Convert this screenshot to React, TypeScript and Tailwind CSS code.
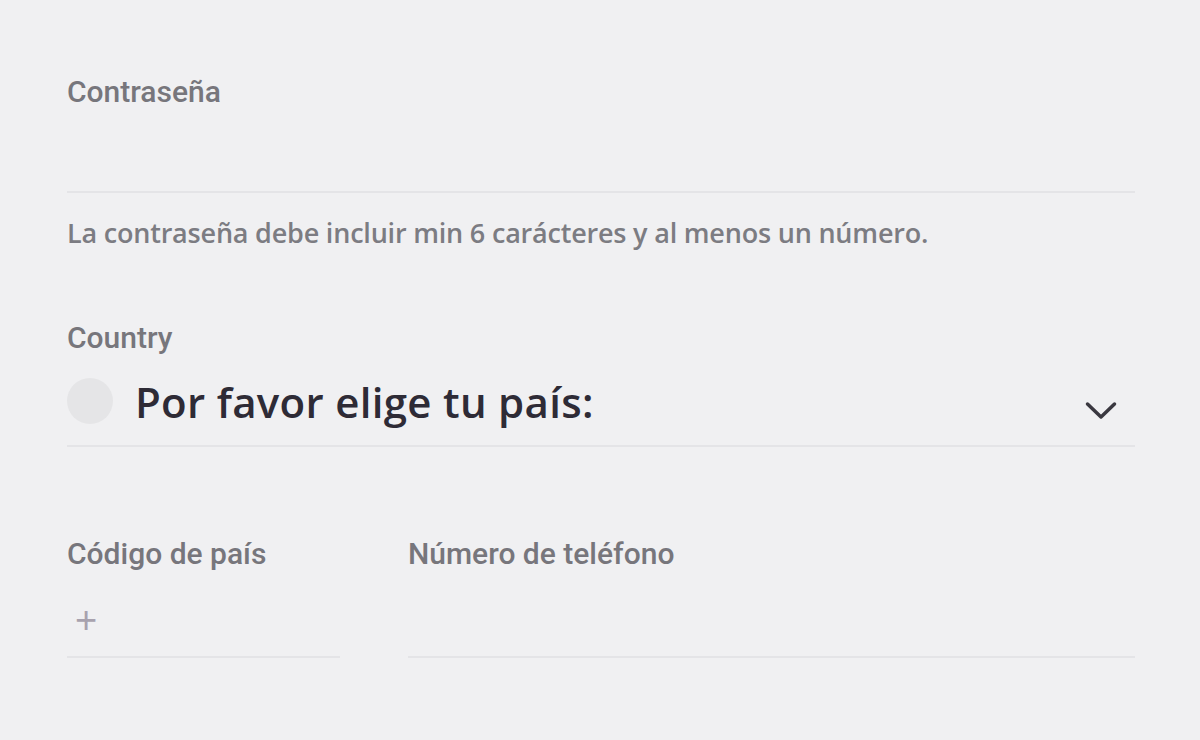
import React from "react";

const labelCls = "block text-[30px] leading-[36px] font-medium text-[#77767c]";

export default function App() {
  return (
    <div className="w-[1200px] h-[740px] bg-[#f0f0f2] overflow-hidden" style={{ fontFamily: "Roboto, 'Liberation Sans', sans-serif" }}>
      <div className="ml-[67px] w-[1068px] pt-[74px]">
        <label className={labelCls}>Contraseña</label>
        <div className="h-[83px] border-b-2 border-[#e4e4e7]"></div>
        <p className="mt-[24px] text-[27px] leading-[32px] font-semibold text-[#7c7c82] tracking-[-0.2px]" style={{ fontFamily: "'Open Sans', 'Liberation Sans', sans-serif" }}>
          La contraseña debe incluir min 6 carácteres y al menos un número.
        </p>
        <label className={"mt-[71px] " + labelCls}>Country</label>
        <div className="flex items-center h-[91px] border-b-2 border-[#e4e4e7]">
          <div className="w-[46px] h-[46px] rounded-full bg-[#e5e5e7]"></div>
          <span className="ml-[22px] mt-[2px] text-[42px] leading-[48px] font-semibold text-[#2e2b36] tracking-[0.3px]" style={{ fontFamily: "'Open Sans', 'Liberation Sans', sans-serif" }}>
            Por favor elige tu país:
          </span>
          <svg className="ml-auto mr-[18px] mt-[20px]" width="32" height="20" viewBox="0 0 32 20" fill="none">
            <path d="M2.5 3 L16 16 L29.5 3" stroke="#3a3840" strokeWidth="3.5" strokeLinecap="round" strokeLinejoin="round" />
          </svg>
        </div>
        <div className="flex mt-[89px] gap-[68px]">
          <div className="w-[273px]">
            <label className={labelCls}>Código de país</label>
            <div className="h-[86px] flex items-center pt-[12px] border-b-2 border-[#e4e4e7] pl-[8px]">
              <span className="text-[38px] leading-[40px] text-[#a8a2ae]" style={{ fontFamily: "'Liberation Sans', Arial, sans-serif" }}>+</span>
            </div>
          </div>
          <div className="flex-1">
            <label className={labelCls}>Número de teléfono</label>
            <div className="h-[86px] border-b-2 border-[#e4e4e7]"></div>
          </div>
        </div>
      </div>
    </div>
  );
}
